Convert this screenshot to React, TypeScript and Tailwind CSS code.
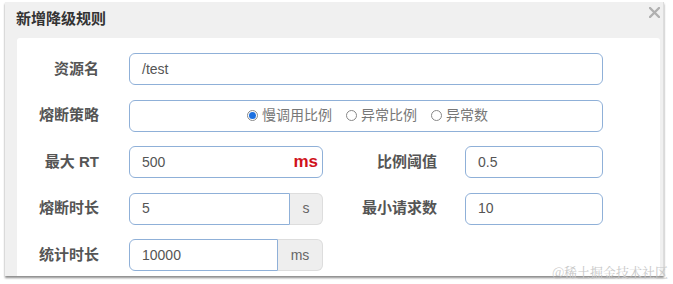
import React from "react";

const font = "font-['Liberation_Sans','Noto_Sans_CJK_SC',sans-serif]";
const inputBox = "h-full border border-[#8fb0d8] rounded-[6px] bg-white flex items-center pl-[12px] text-[14px] text-[#555]";

function Label({ text, w }: { text: string; w: string }) {
  return <div className={`${w} shrink-0 text-right text-[15px] font-bold text-[#555]`}>{text}</div>;
}

function Radio({ checked, text }: { checked?: boolean; text: string }) {
  return (
    <span className="flex items-center gap-[4px] text-[14px] text-[#777]">
      <span className="w-[11px] h-[11px] rounded-full border border-[#888] bg-white flex items-center justify-center">
        {checked && <span className="w-[7px] h-[7px] rounded-full bg-[#1b6fe0]" />}
      </span>
      {text}
    </span>
  );
}

function WithAddon({ value, addon, w, aw }: { value: string; addon: string; w: string; aw: string }) {
  return (
    <div className="flex h-full">
      <div className={`${w} border border-[#8fb0d8] rounded-l-[6px] bg-white flex items-center pl-[12px] text-[14px] text-[#555]`}>{value}</div>
      <div className={`${aw} border border-l-0 border-[#ddd] rounded-r-[6px] bg-[#eee] flex items-center justify-center text-[14px] text-[#666]`}>{addon}</div>
    </div>
  );
}

function RightField({ label, value }: { label: string; value: string }) {
  return (
    <div className="flex items-center h-full">
      <Label text={label} w="w-[114px]" />
      <div className={`ml-[28px] w-[138px] ${inputBox}`}>{value}</div>
    </div>
  );
}

export default function App() {
  return (
    <div className={`w-[673px] h-[284px] bg-white relative overflow-hidden ${font}`}>
      <div className="ml-[5px] mt-[2px] w-[659px] h-[274px] bg-[#f0f0f0] border-r border-[#ddd] shadow-[0_2px_2px_rgba(0,0,0,0.45)] flex flex-col">
        <div className="h-[36px] shrink-0 flex items-center justify-between pl-[11px] pr-[3px]">
          <span className="text-[15px] font-bold text-[#333] -mt-[1px]">新增降级规则</span>
          <svg className="self-start mt-[5px]" width="11" height="11" viewBox="0 0 11 11">
            <path d="M1 1L10 10M10 1L1 10" stroke="#b0b0b0" strokeWidth="2.4" strokeLinecap="round" />
          </svg>
        </div>
        <div className="ml-[12px] w-[643px] flex-1 bg-white rounded-t-[3px] pt-[15px] flex flex-col gap-[14.5px] overflow-hidden">
          <div className="flex items-center h-[32px] shrink-0">
            <Label text="资源名" w="w-[82px]" />
            <div className={`ml-[30px] w-[474px] ${inputBox}`}>/test</div>
          </div>
          <div className="flex items-center h-[32px] shrink-0">
            <Label text="熔断策略" w="w-[82px]" />
            <div className={`ml-[30px] w-[474px] ${inputBox} gap-[14px] pl-[117px]`}>
              <Radio checked text="慢调用比例" />
              <Radio text="异常比例" />
              <Radio text="异常数" />
            </div>
          </div>
          <div className="flex items-center h-[32px] shrink-0">
            <Label text="最大 RT" w="w-[82px]" />
            <div className={`ml-[30px] w-[194px] ${inputBox} justify-between pr-[4px]`}>
              <span>500</span>
              <span className="text-[#d0121b] font-bold text-[17px]">ms</span>
            </div>
            <RightField label="比例阈值" value="0.5" />
          </div>
          <div className="flex items-center h-[32px] shrink-0">
            <Label text="熔断时长" w="w-[82px]" />
            <div className="ml-[30px] h-full">
              <WithAddon value="5" addon="s" w="w-[161px]" aw="w-[33px]" />
            </div>
            <RightField label="最小请求数" value="10" />
          </div>
          <div className="flex items-center h-[32px] shrink-0">
            <Label text="统计时长" w="w-[82px]" />
            <div className="ml-[30px] h-full">
              <WithAddon value="10000" addon="ms" w="w-[149px]" aw="w-[45px]" />
            </div>
          </div>
        </div>
      </div>
      <span className="absolute right-[5px] bottom-[3px] text-[13px] text-[#c8c8c8] font-['Noto_Serif_CJK_SC','Noto_Sans_CJK_SC',serif]">@稀土掘金技术社区</span>
    </div>
  );
}
